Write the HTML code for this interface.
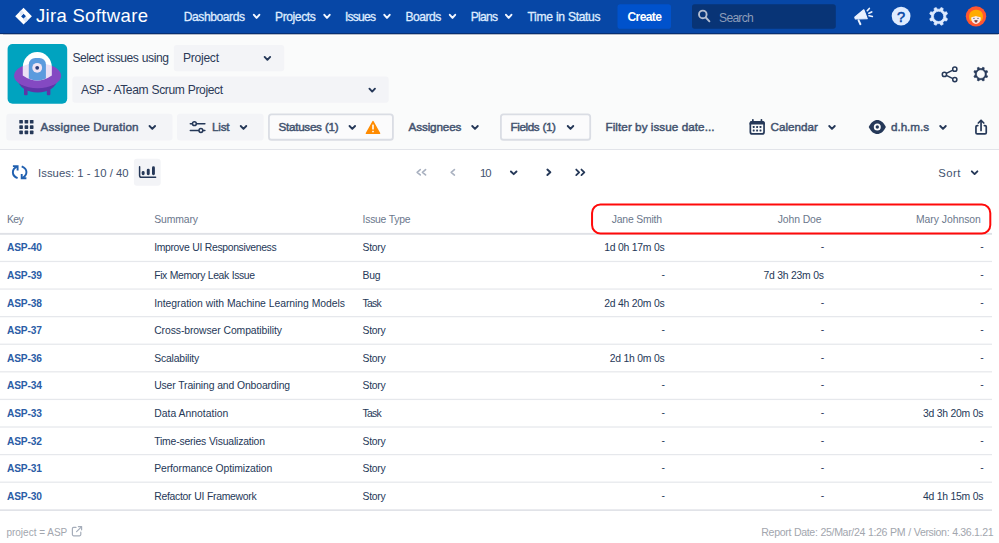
<!DOCTYPE html>
<html lang="en">
<head>
<meta charset="utf-8">
<title>Time in Status - Assignee Duration</title>
<style>
html,body{margin:0;padding:0;}
body{width:999px;height:543px;overflow:hidden;background:#FFFFFF;position:relative;font-family:"Liberation Sans",sans-serif;}
.t{position:absolute;white-space:pre;line-height:1;font-family:"Liberation Sans",sans-serif;}
.abs{position:absolute;}
#nav{position:absolute;left:0;top:0;width:999px;height:32.6px;background:#0747A6;border-bottom:1.4px solid #062F73;box-sizing:content-box;box-shadow:0 0.5px 1px rgba(9,30,66,0.3);}
#head{position:absolute;left:0;top:35.5px;width:999px;height:113.5px;background:#FAFBFB;border-bottom:1.2px solid #E2E4E9;}
svg{position:absolute;overflow:visible;}
</style>
</head>
<body>
<div id="nav"></div>
<div id="head"></div>
<svg width="999" height="543" viewBox="0 0 999 543" style="left:0;top:0">
<rect x="617.5" y="4.3" width="53.50" height="24.40" rx="2.8" ry="2.8" fill="#0052CC"/>
<rect x="692" y="4.3" width="143.80" height="24.40" rx="2.6" ry="2.6" fill="#083476"/>
<rect x="173.8" y="44.9" width="110.40" height="26.30" rx="3" ry="3" fill="#F3F4F7"/>
<rect x="72.4" y="76.5" width="316.30" height="26.20" rx="3" ry="3" fill="#F3F4F7"/>
<rect x="6.3" y="113.8" width="166.20" height="26.60" rx="3" ry="3" fill="#F3F4F7"/>
<rect x="177" y="113.8" width="86.60" height="26.60" rx="3" ry="3" fill="#F3F4F7"/>
<rect x="268.95" y="114.3" width="123.95" height="25.45" rx="2.6" ry="2.6" fill="#FBFBFC" stroke="#DADDE4" stroke-width="1.8"/>
<rect x="500.9" y="114.3" width="89.30" height="25.45" rx="2.6" ry="2.6" fill="#FBFBFC" stroke="#DADDE4" stroke-width="1.8"/>
<rect x="133.9" y="158.7" width="26.80" height="27.00" rx="3" ry="3" fill="#F3F4F7"/>
<rect x="0" y="232.9" width="992" height="1.9" fill="#DFE1E6"/>
<rect x="0" y="260.84" width="992" height="1.25" fill="#E6E8EC"/>
<rect x="0" y="288.43" width="992" height="1.25" fill="#E6E8EC"/>
<rect x="0" y="316.02" width="992" height="1.25" fill="#E6E8EC"/>
<rect x="0" y="343.61" width="992" height="1.25" fill="#E6E8EC"/>
<rect x="0" y="371.20" width="992" height="1.25" fill="#E6E8EC"/>
<rect x="0" y="398.79" width="992" height="1.25" fill="#E6E8EC"/>
<rect x="0" y="426.38" width="992" height="1.25" fill="#E6E8EC"/>
<rect x="0" y="453.97" width="992" height="1.25" fill="#E6E8EC"/>
<rect x="0" y="481.56" width="992" height="1.25" fill="#E6E8EC"/>
<rect x="0" y="509.3" width="992" height="1.7" fill="#E1E3E8"/>
</svg>
<svg width="999" height="543" viewBox="0 0 999 543" style="left:0;top:0">
<polyline points="253.90,14.85 256.60,17.85 259.30,14.85" fill="none" stroke="#F2F6FF" stroke-width="2.0" stroke-linecap="round" stroke-linejoin="round"/>
<polyline points="324.30,14.85 327.00,17.85 329.70,14.85" fill="none" stroke="#F2F6FF" stroke-width="2.0" stroke-linecap="round" stroke-linejoin="round"/>
<polyline points="384.30,14.85 387.00,17.85 389.70,14.85" fill="none" stroke="#F2F6FF" stroke-width="2.0" stroke-linecap="round" stroke-linejoin="round"/>
<polyline points="449.80,14.85 452.50,17.85 455.20,14.85" fill="none" stroke="#F2F6FF" stroke-width="2.0" stroke-linecap="round" stroke-linejoin="round"/>
<polyline points="506.00,14.85 508.70,17.85 511.40,14.85" fill="none" stroke="#F2F6FF" stroke-width="2.0" stroke-linecap="round" stroke-linejoin="round"/>
<polyline points="264.63,56.95 267.40,59.85 270.17,56.95" fill="none" stroke="#253858" stroke-width="1.9" stroke-linecap="round" stroke-linejoin="round"/>
<polyline points="369.43,88.65 372.20,91.55 374.97,88.65" fill="none" stroke="#253858" stroke-width="1.9" stroke-linecap="round" stroke-linejoin="round"/>
<polyline points="149.53,126.00 152.30,128.90 155.07,126.00" fill="none" stroke="#253858" stroke-width="1.9" stroke-linecap="round" stroke-linejoin="round"/>
<polyline points="240.73,126.00 243.50,128.90 246.27,126.00" fill="none" stroke="#253858" stroke-width="1.9" stroke-linecap="round" stroke-linejoin="round"/>
<polyline points="349.53,126.00 352.30,128.90 355.07,126.00" fill="none" stroke="#253858" stroke-width="1.9" stroke-linecap="round" stroke-linejoin="round"/>
<polyline points="472.23,126.00 475.00,128.90 477.77,126.00" fill="none" stroke="#253858" stroke-width="1.9" stroke-linecap="round" stroke-linejoin="round"/>
<polyline points="567.73,126.00 570.50,128.90 573.27,126.00" fill="none" stroke="#253858" stroke-width="1.9" stroke-linecap="round" stroke-linejoin="round"/>
<polyline points="829.23,126.00 832.00,128.90 834.77,126.00" fill="none" stroke="#253858" stroke-width="1.9" stroke-linecap="round" stroke-linejoin="round"/>
<polyline points="940.23,126.00 943.00,128.90 945.77,126.00" fill="none" stroke="#253858" stroke-width="1.9" stroke-linecap="round" stroke-linejoin="round"/>
<polyline points="510.91,171.45 513.70,174.15 516.49,171.45" fill="none" stroke="#253858" stroke-width="1.9" stroke-linecap="round" stroke-linejoin="round"/>
<polyline points="971.81,171.30 974.60,174.10 977.39,171.30" fill="none" stroke="#253858" stroke-width="1.9" stroke-linecap="round" stroke-linejoin="round"/>
<polyline points="420.28,169.62 417.12,172.30 420.28,174.98" fill="none" stroke="#A9B1C0" stroke-width="1.6" stroke-linecap="round" stroke-linejoin="round"/>
<polyline points="425.58,169.62 422.42,172.30 425.58,174.98" fill="none" stroke="#A9B1C0" stroke-width="1.6" stroke-linecap="round" stroke-linejoin="round"/>
<polyline points="454.43,169.57 451.17,172.30 454.43,175.03" fill="none" stroke="#A9B1C0" stroke-width="1.6" stroke-linecap="round" stroke-linejoin="round"/>
<polyline points="547.36,169.56 550.35,172.30 547.36,175.05" fill="none" stroke="#253858" stroke-width="1.9" stroke-linecap="round" stroke-linejoin="round"/>
<polyline points="576.26,169.56 579.14,172.30 576.26,175.04" fill="none" stroke="#253858" stroke-width="1.8" stroke-linecap="round" stroke-linejoin="round"/>
<polyline points="581.46,169.56 584.34,172.30 581.46,175.04" fill="none" stroke="#253858" stroke-width="1.8" stroke-linecap="round" stroke-linejoin="round"/>
<rect x="592.05" y="204.55" width="398.25" height="28.9" rx="8.4" ry="8.4" fill="none" stroke="#FF0A0A" stroke-width="2"/>
<g><path d="M23.55 7.799999999999999 L31.9 16.15 L23.55 24.5 L15.200000000000001 16.15 Z M23.55 13.649999999999999 L21.05 16.15 L23.55 18.65 L26.05 16.15 Z" fill="#FFFFFF" fill-rule="evenodd"/><path d="M19.15 12.249999999999998 L21.35 10.049999999999999 L24.150000000000002 13.049999999999999 L21.05 16.15 Z" fill="#DDE7F8"/><path d="M27.950000000000003 20.049999999999997 L25.75 22.25 L22.95 19.25 L26.05 16.15 Z" fill="#DDE7F8"/></g>
<g fill="none" stroke="#B3BDD0" stroke-width="1.9" stroke-linecap="round"><circle cx="702.8" cy="14.4" r="3.8"/><line x1="705.8" y1="17.5" x2="709.4" y2="21.3"/></g>
<g fill="#EAF2FF" stroke="#EAF2FF" stroke-linecap="round" stroke-linejoin="round"><path d="M854.8 17.2 L863.8 9.8 L867.2 18.6 L855.4 19 Z" stroke-width="1.2"/><line x1="858.6" y1="20.4" x2="860.4" y2="24.2" stroke-width="2"/><line x1="867.3" y1="10.7" x2="869.3" y2="8.5" stroke-width="1.7"/><line x1="868.9" y1="13.2" x2="871.7" y2="11.9" stroke-width="1.7"/><line x1="869.1" y1="15.7" x2="872.3" y2="16.5" stroke-width="1.7"/></g>
<circle cx="901.1" cy="16.1" r="9.4" fill="#DEEBFF"/>
<text x="901.1" y="21.5" text-anchor="middle" font-family="Liberation Sans, sans-serif" font-weight="400" font-size="14.6" fill="#0747A6" stroke="#0747A6" stroke-width="0.55">?</text>
<path d="M945.80 17.61 L947.48 18.79 L946.57 20.99 L944.55 20.63 L942.83 22.35 L943.19 24.37 L940.99 25.28 L939.81 23.60 L937.39 23.60 L936.21 25.28 L934.01 24.37 L934.37 22.35 L932.65 20.63 L930.63 20.99 L929.72 18.79 L931.40 17.61 L931.40 15.19 L929.72 14.01 L930.63 11.81 L932.65 12.17 L934.37 10.45 L934.01 8.43 L936.21 7.52 L937.39 9.20 L939.81 9.20 L940.99 7.52 L943.19 8.43 L942.83 10.45 L944.55 12.17 L946.57 11.81 L947.48 14.01 L945.80 15.19 Z M933.50 16.40 a5.1 5.1 0 1 0 10.2 0 a5.1 5.1 0 1 0 -10.2 0 Z" fill="#DEEBFF" fill-rule="evenodd" stroke="#DEEBFF" stroke-width="0.7" stroke-linejoin="round"/>
<g><circle cx="976" cy="16.35" r="10.2" fill="#FF5630"/><path d="M969.3 18.5 C968.6 14 970.5 10.2 975.8 9.8 C981.4 9.6 983.6 13.6 982.8 18 C982.6 19.6 981.8 20.8 981 21 L971 21 C970.2 20.8 969.5 19.8 969.3 18.5 Z" fill="#FFAB00"/><path d="M971.2 17.6 C972.5 16.4 974 16.6 975.9 15.9 C977.6 16.6 979.4 16.4 980.8 17.6 C981 21 979.2 23.9 976 23.9 C972.8 23.9 971 21 971.2 17.6 Z" fill="#FBE9E4"/><rect x="973" y="17.9" width="1.8" height="1" fill="#7A869A"/><rect x="977.1" y="17.9" width="1.8" height="1" fill="#7A869A"/><path d="M974.4 20.3 L977.6 20.3 C977.6 21.8 976.9 22.4 976 22.4 C975.1 22.4 974.4 21.8 974.4 20.3 Z" fill="#4A2A2A"/><rect x="975.2" y="21.4" width="1.6" height="0.9" fill="#E5493A"/></g>
<g><defs><clipPath id="domeclip"><path d="M22.8 67 A14.5 15 0 0 1 51.8 67 L51.8 75.6 Q37.3 85.6 22.8 75.6 Z"/></clipPath></defs><rect x="7.6" y="44" width="59.6" height="59.8" rx="5" ry="5" fill="#00A3BF"/><rect x="24" y="86" width="3.6" height="9.2" rx="1" fill="#5E35A8"/><rect x="46.8" y="86" width="3.6" height="9.2" rx="1" fill="#5E35A8"/><ellipse cx="37.6" cy="79.5" rx="19.5" ry="13" fill="#5E35A8"/><ellipse cx="37.6" cy="75.7" rx="23.6" ry="12.5" fill="#8449C2"/><path d="M22.8 67 A14.5 15 0 0 1 51.8 67 L51.8 75.6 Q37.3 85.6 22.8 75.6 Z" fill="#FFFFFF"/><ellipse cx="37.6" cy="75.7" rx="23.6" ry="12.5" fill="#8449C2" fill-opacity="0.17" clip-path="url(#domeclip)"/><path d="M28.8 64.5 A6.5 6.6 0 0 1 35.3 57.9 L39.4 57.9 A6.5 6.6 0 0 1 45.9 64.5 L45.9 78.6 Q37.3 82.4 28.8 78.6 Z" fill="#5B9BDE"/><circle cx="37.2" cy="67.8" r="4.9" fill="#F1E4F3"/><circle cx="37.2" cy="67.8" r="1.9" fill="#2C3E7B"/></g>
<rect x="19.30" y="120.00" width="3.6" height="3.6" rx="0.6" fill="#253858"/><rect x="24.60" y="120.00" width="3.6" height="3.6" rx="0.6" fill="#253858"/><rect x="29.90" y="120.00" width="3.6" height="3.6" rx="0.6" fill="#253858"/><rect x="19.30" y="125.30" width="3.6" height="3.6" rx="0.6" fill="#253858"/><rect x="24.60" y="125.30" width="3.6" height="3.6" rx="0.6" fill="#253858"/><rect x="29.90" y="125.30" width="3.6" height="3.6" rx="0.6" fill="#253858"/><rect x="19.30" y="130.60" width="3.6" height="3.6" rx="0.6" fill="#253858"/><rect x="24.60" y="130.60" width="3.6" height="3.6" rx="0.6" fill="#253858"/><rect x="29.90" y="130.60" width="3.6" height="3.6" rx="0.6" fill="#253858"/>
<g fill="none" stroke="#253858" stroke-width="1.5" stroke-linecap="round"><line x1="190.3" y1="123.7" x2="192.2" y2="123.7"/><circle cx="194.4" cy="123.7" r="1.9" fill="#F3F4F7"/><line x1="196.8" y1="123.7" x2="204.9" y2="123.7"/><line x1="190.3" y1="130.5" x2="198.4" y2="130.5"/><circle cx="200.9" cy="130.5" r="1.9" fill="#F3F4F7"/><line x1="203.4" y1="130.5" x2="204.9" y2="130.5"/></g>
<g><path d="M373 121.6 L379.6 133.4 L366.4 133.4 Z" fill="#FF8B00" stroke="#FF8B00" stroke-width="1.4" stroke-linejoin="round"/><rect x="372.2" y="124.6" width="1.6" height="5" rx="0.5" fill="#FFFFFF"/><rect x="372.2" y="130.7" width="1.6" height="1.6" rx="0.5" fill="#FFFFFF"/></g>
<g><rect x="750.35" y="121.95" width="13.7" height="12" rx="2" fill="none" stroke="#253858" stroke-width="1.7"/><path d="M749.5 124.4 L749.5 123.4 Q749.5 121.1 751.8 121.1 L762.6 121.1 Q764.9 121.1 764.9 123.4 L764.9 124.4 Z" fill="#253858"/><rect x="752.0" y="119.1" width="1.7" height="3.2" rx="0.7" fill="#253858"/><rect x="760.6" y="119.1" width="1.7" height="3.2" rx="0.7" fill="#253858"/><rect x="752.75" y="126.05" width="1.9" height="1.9" rx="0.4" fill="#253858"/><rect x="756.15" y="126.05" width="1.9" height="1.9" rx="0.4" fill="#253858"/><rect x="759.55" y="126.05" width="1.9" height="1.9" rx="0.4" fill="#253858"/><rect x="752.75" y="129.55" width="1.9" height="1.9" rx="0.4" fill="#253858"/><rect x="756.15" y="129.55" width="1.9" height="1.9" rx="0.4" fill="#253858"/><rect x="759.55" y="129.55" width="1.9" height="1.9" rx="0.4" fill="#253858"/></g>
<g><path d="M868.7 127 C871.4 122 874 120 877.3 120 C880.6 120 883.2 122 885.9 127 C883.2 132 880.6 134 877.3 134 C874 134 871.4 132 868.7 127 Z" fill="#253858"/><circle cx="877.3" cy="127" r="2.6" fill="none" stroke="#FAFBFC" stroke-width="1.8"/></g>
<g fill="none" stroke="#253858" stroke-width="1.7" stroke-linecap="round" stroke-linejoin="round"><path d="M977.8 125.55 L977.2 125.55 Q975.95 125.55 975.95 126.8 L975.95 132.7 Q975.95 133.95 977.2 133.95 L985 133.95 Q986.25 133.95 986.25 132.7 L986.25 126.8 Q986.25 125.55 985 125.55 L984.4 125.55"/><line x1="981.05" y1="120.6" x2="981.05" y2="130.4"/><polyline points="978.3,123 981.05,120.3 983.8,123"/></g>
<g fill="none" stroke="#253858" stroke-width="1.5"><line x1="946.3" y1="73.4" x2="952.9" y2="70.1"/><line x1="946.3" y1="75.4" x2="952.9" y2="78.7"/><circle cx="944.4" cy="74.4" r="2.1"/><circle cx="954.8" cy="69.2" r="2.1"/><circle cx="954.8" cy="79.6" r="2.1"/></g>
<path d="M986.40 75.16 L987.73 76.07 L987.09 77.60 L985.51 77.31 L984.01 78.81 L984.30 80.39 L982.77 81.03 L981.86 79.70 L979.74 79.70 L978.83 81.03 L977.30 80.39 L977.59 78.81 L976.09 77.31 L974.51 77.60 L973.87 76.07 L975.20 75.16 L975.20 73.04 L973.87 72.13 L974.51 70.60 L976.09 70.89 L977.59 69.39 L977.30 67.81 L978.83 67.17 L979.74 68.50 L981.86 68.50 L982.77 67.17 L984.30 67.81 L984.01 69.39 L985.51 70.89 L987.09 70.60 L987.73 72.13 L986.40 73.04 Z M976.45 74.10 a4.35 4.35 0 1 0 8.7 0 a4.35 4.35 0 1 0 -8.7 0 Z" fill="#253858" fill-rule="evenodd" stroke="#253858" stroke-width="0.6" stroke-linejoin="round"/>
<g fill="none" stroke="#2060B0" stroke-width="1.9" stroke-linecap="butt" stroke-linejoin="miter"><path d="M17.6 178.1 C11.2 175.6 11.6 169.2 16.9 166.6"/><polyline points="12.9,166.1 17.6,166.1 17.6,170.5"/><path d="M21.7 166.3 C28.1 168.8 27.7 175.2 22.4 177.8"/><polyline points="26.4,178.3 21.7,178.3 21.7,173.9"/></g>
<g><path d="M139.6 166.8 L139.6 175.4 Q139.6 177.2 141.4 177.2 L155.6 177.2" fill="none" stroke="#253858" stroke-width="1.5" stroke-linecap="round" stroke-linejoin="round"/><rect x="141.7" y="171" width="2.9" height="4.2" rx="1.4" fill="#253858"/><rect x="146.8" y="168.7" width="2.9" height="6.5" rx="1.4" fill="#253858"/><rect x="152" y="166.3" width="2.9" height="8.9" rx="1.4" fill="#253858"/></g>
<g fill="none" stroke="#A5ADBA" stroke-width="1.2" stroke-linecap="round" stroke-linejoin="round"><path d="M76 527.4 L73.6 527.4 Q72.4 527.4 72.4 528.6 L72.4 534.6 Q72.4 535.8 73.6 535.8 L79.6 535.8 Q80.8 535.8 80.8 534.6 L80.8 532.2"/><line x1="76.6" y1="531.6" x2="81.4" y2="526.8"/><polyline points="78.4,526.6 81.6,526.6 81.6,529.8"/></g>
</svg>
<span class="t" style="left:36.00px;top:7px;font-size:18.5px;color:#FFFFFF;letter-spacing:0.366px;word-spacing:-0.366px;">Jira Software</span>
<span class="t" style="left:183.75px;top:11px;font-size:12.1px;-webkit-text-stroke:0.3px #DEEBFF;color:#DEEBFF;letter-spacing:-0.441px;">Dashboards</span>
<span class="t" style="left:275.00px;top:11px;font-size:12.1px;-webkit-text-stroke:0.3px #DEEBFF;color:#DEEBFF;letter-spacing:-0.420px;">Projects</span>
<span class="t" style="left:345.00px;top:11px;font-size:12.1px;-webkit-text-stroke:0.3px #DEEBFF;color:#DEEBFF;letter-spacing:-0.791px;">Issues</span>
<span class="t" style="left:405.50px;top:11px;font-size:12.1px;-webkit-text-stroke:0.3px #DEEBFF;color:#DEEBFF;letter-spacing:-0.516px;">Boards</span>
<span class="t" style="left:470.75px;top:11px;font-size:12.1px;-webkit-text-stroke:0.3px #DEEBFF;color:#DEEBFF;letter-spacing:-0.754px;">Plans</span>
<span class="t" style="left:527.50px;top:11px;font-size:12.1px;-webkit-text-stroke:0.3px #DEEBFF;color:#DEEBFF;letter-spacing:-0.349px;word-spacing:0.349px;">Time in Status</span>
<span class="t" style="left:627.50px;top:11px;font-size:12.1px;font-weight:700;color:#FFFFFF;letter-spacing:-0.631px;">Create</span>
<span class="t" style="left:719.10px;top:12px;font-size:12.1px;color:#8C9CB8;letter-spacing:-0.746px;">Search</span>
<span class="t" style="left:72.40px;top:52px;font-size:12.1px;color:#2C3A57;letter-spacing:-0.433px;word-spacing:0.433px;">Select issues using</span>
<span class="t" style="left:183.00px;top:52px;font-size:12.1px;color:#2C3A57;letter-spacing:-0.273px;">Project</span>
<span class="t" style="left:81.00px;top:84px;font-size:12.1px;color:#2C3A57;letter-spacing:-0.405px;word-spacing:0.405px;">ASP - ATeam Scrum Project</span>
<span class="t" style="left:40.60px;top:121px;font-size:11.7px;-webkit-text-stroke:0.45px #42526E;color:#42526E;letter-spacing:0.166px;word-spacing:-0.166px;">Assignee Duration</span>
<span class="t" style="left:212.00px;top:121px;font-size:11.7px;-webkit-text-stroke:0.45px #42526E;color:#42526E;letter-spacing:-0.201px;">List</span>
<span class="t" style="left:278.60px;top:121px;font-size:11.7px;-webkit-text-stroke:0.45px #42526E;color:#42526E;letter-spacing:-0.302px;word-spacing:0.302px;">Statuses (1)</span>
<span class="t" style="left:408.60px;top:121px;font-size:11.7px;-webkit-text-stroke:0.45px #42526E;color:#42526E;letter-spacing:-0.142px;">Assignees</span>
<span class="t" style="left:510.50px;top:121px;font-size:11.7px;-webkit-text-stroke:0.45px #42526E;color:#42526E;letter-spacing:-0.402px;word-spacing:0.402px;">Fields (1)</span>
<span class="t" style="left:605.50px;top:121px;font-size:11.7px;-webkit-text-stroke:0.45px #42526E;color:#42526E;letter-spacing:0.061px;word-spacing:-0.061px;">Filter by issue date...</span>
<span class="t" style="left:770.60px;top:121px;font-size:11.7px;-webkit-text-stroke:0.45px #42526E;color:#42526E;letter-spacing:-0.034px;">Calendar</span>
<span class="t" style="left:891.00px;top:121px;font-size:11.7px;-webkit-text-stroke:0.45px #42526E;color:#42526E;letter-spacing:-0.055px;">d.h.m.s</span>
<span class="t" style="left:38.00px;top:168px;font-size:11.3px;color:#42526E;letter-spacing:0.062px;word-spacing:-0.062px;">Issues: 1 - 10 / 40</span>
<span class="t" style="left:480.00px;top:168px;font-size:11.3px;color:#42526E;letter-spacing:-0.978px;">10</span>
<span class="t" style="left:938.20px;top:168px;font-size:11.3px;color:#42526E;letter-spacing:0.527px;">Sort</span>
<span class="t" style="left:7.00px;top:215px;font-size:10.4px;color:#6B778C;letter-spacing:-0.578px;">Key</span>
<span class="t" style="left:154.20px;top:215px;font-size:10.4px;color:#6B778C;letter-spacing:-0.111px;">Summary</span>
<span class="t" style="left:362.60px;top:215px;font-size:10.4px;color:#6B778C;letter-spacing:-0.258px;word-spacing:0.258px;">Issue Type</span>
<span class="t" style="left:611.80px;top:215px;font-size:10.4px;color:#6B778C;letter-spacing:-0.223px;word-spacing:0.223px;">Jane Smith</span>
<span class="t" style="left:777.80px;top:215px;font-size:10.4px;color:#6B778C;letter-spacing:-0.131px;word-spacing:0.131px;">John Doe</span>
<span class="t" style="left:916.00px;top:215px;font-size:10.4px;color:#6B778C;letter-spacing:-0.037px;word-spacing:0.037px;">Mary Johnson</span>
<span class="t" style="left:7.00px;top:243px;font-size:10.2px;font-weight:700;color:#2A5CA6;letter-spacing:-0.174px;">ASP-40</span>
<span class="t" style="left:154.20px;top:243px;font-size:10.4px;color:#253858;letter-spacing:-0.339px;word-spacing:0.339px;">Improve UI Responsiveness</span>
<span class="t" style="left:362.60px;top:243px;font-size:10.4px;color:#253858;letter-spacing:-0.291px;">Story</span>
<span class="t" style="left:604.20px;top:243px;font-size:10.4px;color:#253858;letter-spacing:-0.321px;word-spacing:0.321px;">1d 0h 17m 0s</span>
<span class="t" style="left:820.70px;top:242px;font-size:10.4px;color:#253858;letter-spacing:-0.269px;">-</span>
<span class="t" style="left:980.20px;top:242px;font-size:10.4px;color:#253858;letter-spacing:-0.269px;">-</span>
<span class="t" style="left:7.00px;top:271px;font-size:10.2px;font-weight:700;color:#2A5CA6;letter-spacing:-0.174px;">ASP-39</span>
<span class="t" style="left:154.20px;top:271px;font-size:10.4px;color:#253858;letter-spacing:-0.389px;word-spacing:0.389px;">Fix Memory Leak Issue</span>
<span class="t" style="left:362.60px;top:271px;font-size:10.4px;color:#253858;letter-spacing:-0.250px;">Bug</span>
<span class="t" style="left:661.40px;top:270px;font-size:10.4px;color:#253858;letter-spacing:-0.269px;">-</span>
<span class="t" style="left:763.50px;top:271px;font-size:10.4px;color:#253858;letter-spacing:-0.321px;word-spacing:0.321px;">7d 3h 23m 0s</span>
<span class="t" style="left:980.20px;top:270px;font-size:10.4px;color:#253858;letter-spacing:-0.269px;">-</span>
<span class="t" style="left:7.00px;top:299px;font-size:10.2px;font-weight:700;color:#2A5CA6;letter-spacing:-0.174px;">ASP-38</span>
<span class="t" style="left:154.20px;top:299px;font-size:10.4px;color:#253858;letter-spacing:-0.044px;word-spacing:0.044px;">Integration with Machine Learning Models</span>
<span class="t" style="left:362.60px;top:299px;font-size:10.4px;color:#253858;letter-spacing:-0.725px;">Task</span>
<span class="t" style="left:604.20px;top:299px;font-size:10.4px;color:#253858;letter-spacing:-0.321px;word-spacing:0.321px;">2d 4h 20m 0s</span>
<span class="t" style="left:820.70px;top:298px;font-size:10.4px;color:#253858;letter-spacing:-0.269px;">-</span>
<span class="t" style="left:980.20px;top:298px;font-size:10.4px;color:#253858;letter-spacing:-0.269px;">-</span>
<span class="t" style="left:7.00px;top:326px;font-size:10.2px;font-weight:700;color:#2A5CA6;letter-spacing:-0.174px;">ASP-37</span>
<span class="t" style="left:154.20px;top:326px;font-size:10.4px;color:#253858;letter-spacing:-0.089px;word-spacing:0.089px;">Cross-browser Compatibility</span>
<span class="t" style="left:362.60px;top:326px;font-size:10.4px;color:#253858;letter-spacing:-0.291px;">Story</span>
<span class="t" style="left:661.40px;top:325px;font-size:10.4px;color:#253858;letter-spacing:-0.269px;">-</span>
<span class="t" style="left:820.70px;top:325px;font-size:10.4px;color:#253858;letter-spacing:-0.269px;">-</span>
<span class="t" style="left:980.20px;top:325px;font-size:10.4px;color:#253858;letter-spacing:-0.269px;">-</span>
<span class="t" style="left:7.00px;top:354px;font-size:10.2px;font-weight:700;color:#2A5CA6;letter-spacing:-0.174px;">ASP-36</span>
<span class="t" style="left:154.20px;top:354px;font-size:10.4px;color:#253858;letter-spacing:-0.178px;">Scalability</span>
<span class="t" style="left:362.60px;top:354px;font-size:10.4px;color:#253858;letter-spacing:-0.291px;">Story</span>
<span class="t" style="left:609.70px;top:354px;font-size:10.4px;color:#253858;letter-spacing:-0.327px;word-spacing:0.327px;">2d 1h 0m 0s</span>
<span class="t" style="left:820.70px;top:353px;font-size:10.4px;color:#253858;letter-spacing:-0.269px;">-</span>
<span class="t" style="left:980.20px;top:353px;font-size:10.4px;color:#253858;letter-spacing:-0.269px;">-</span>
<span class="t" style="left:7.00px;top:381px;font-size:10.2px;font-weight:700;color:#2A5CA6;letter-spacing:-0.174px;">ASP-34</span>
<span class="t" style="left:154.20px;top:381px;font-size:10.4px;color:#253858;letter-spacing:-0.138px;word-spacing:0.138px;">User Training and Onboarding</span>
<span class="t" style="left:362.60px;top:381px;font-size:10.4px;color:#253858;letter-spacing:-0.291px;">Story</span>
<span class="t" style="left:661.40px;top:380px;font-size:10.4px;color:#253858;letter-spacing:-0.269px;">-</span>
<span class="t" style="left:820.70px;top:380px;font-size:10.4px;color:#253858;letter-spacing:-0.269px;">-</span>
<span class="t" style="left:980.20px;top:380px;font-size:10.4px;color:#253858;letter-spacing:-0.269px;">-</span>
<span class="t" style="left:7.00px;top:409px;font-size:10.2px;font-weight:700;color:#2A5CA6;letter-spacing:-0.174px;">ASP-33</span>
<span class="t" style="left:154.20px;top:409px;font-size:10.4px;color:#253858;letter-spacing:0.011px;word-spacing:-0.011px;">Data Annotation</span>
<span class="t" style="left:362.60px;top:409px;font-size:10.4px;color:#253858;letter-spacing:-0.725px;">Task</span>
<span class="t" style="left:661.40px;top:408px;font-size:10.4px;color:#253858;letter-spacing:-0.269px;">-</span>
<span class="t" style="left:820.70px;top:408px;font-size:10.4px;color:#253858;letter-spacing:-0.269px;">-</span>
<span class="t" style="left:923.00px;top:409px;font-size:10.4px;color:#253858;letter-spacing:-0.321px;word-spacing:0.321px;">3d 3h 20m 0s</span>
<span class="t" style="left:7.00px;top:437px;font-size:10.2px;font-weight:700;color:#2A5CA6;letter-spacing:-0.174px;">ASP-32</span>
<span class="t" style="left:154.20px;top:437px;font-size:10.4px;color:#253858;letter-spacing:-0.179px;word-spacing:0.179px;">Time-series Visualization</span>
<span class="t" style="left:362.60px;top:437px;font-size:10.4px;color:#253858;letter-spacing:-0.291px;">Story</span>
<span class="t" style="left:661.40px;top:436px;font-size:10.4px;color:#253858;letter-spacing:-0.269px;">-</span>
<span class="t" style="left:820.70px;top:436px;font-size:10.4px;color:#253858;letter-spacing:-0.269px;">-</span>
<span class="t" style="left:980.20px;top:436px;font-size:10.4px;color:#253858;letter-spacing:-0.269px;">-</span>
<span class="t" style="left:7.00px;top:464px;font-size:10.2px;font-weight:700;color:#2A5CA6;letter-spacing:-0.174px;">ASP-31</span>
<span class="t" style="left:154.20px;top:464px;font-size:10.4px;color:#253858;letter-spacing:-0.097px;word-spacing:0.097px;">Performance Optimization</span>
<span class="t" style="left:362.60px;top:464px;font-size:10.4px;color:#253858;letter-spacing:-0.291px;">Story</span>
<span class="t" style="left:661.40px;top:463px;font-size:10.4px;color:#253858;letter-spacing:-0.269px;">-</span>
<span class="t" style="left:820.70px;top:463px;font-size:10.4px;color:#253858;letter-spacing:-0.269px;">-</span>
<span class="t" style="left:980.20px;top:463px;font-size:10.4px;color:#253858;letter-spacing:-0.269px;">-</span>
<span class="t" style="left:7.00px;top:492px;font-size:10.2px;font-weight:700;color:#2A5CA6;letter-spacing:-0.174px;">ASP-30</span>
<span class="t" style="left:154.20px;top:492px;font-size:10.4px;color:#253858;letter-spacing:-0.273px;word-spacing:0.273px;">Refactor UI Framework</span>
<span class="t" style="left:362.60px;top:492px;font-size:10.4px;color:#253858;letter-spacing:-0.291px;">Story</span>
<span class="t" style="left:661.40px;top:491px;font-size:10.4px;color:#253858;letter-spacing:-0.269px;">-</span>
<span class="t" style="left:820.70px;top:491px;font-size:10.4px;color:#253858;letter-spacing:-0.269px;">-</span>
<span class="t" style="left:923.00px;top:492px;font-size:10.4px;color:#253858;letter-spacing:-0.321px;word-spacing:0.321px;">4d 1h 15m 0s</span>
<span class="t" style="left:6.40px;top:528px;font-size:10.0px;color:#A2A6AE;">project = ASP</span>
<span class="t" style="left:761.30px;top:527px;font-size:10.6px;color:#A2A6AE;letter-spacing:-0.350px;word-spacing:0.350px;">Report Date: 25/Mar/24 1:26 PM / Version: 4.36.1.21</span>
</body>
</html>
